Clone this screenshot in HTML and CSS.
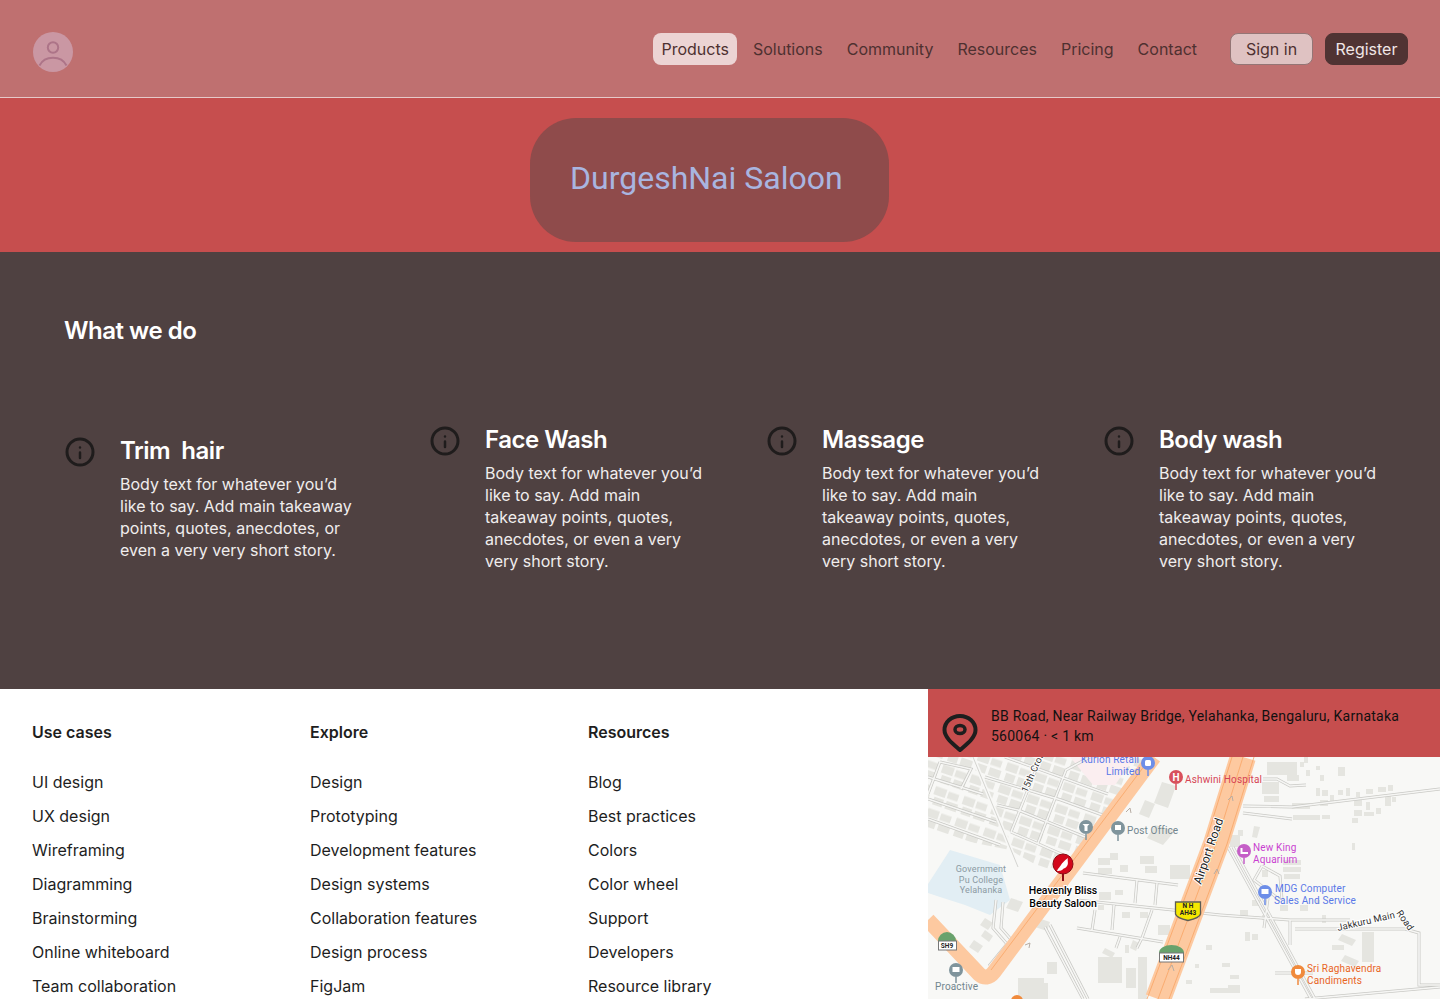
FILE: index.html
```html
<!DOCTYPE html>
<html lang="en">
<head>
  <meta charset="UTF-8" />
  <meta name="viewport" content="width=device-width, initial-scale=1.0" />
  <title>DurgeshNai Saloon</title>
  <link rel="stylesheet" href="styles.css">
</head>
<body>
  <header class="topbar">
    <div class="avatar">
      <svg viewBox="0 0 40 40" width="40" height="40">
        <circle cx="20" cy="15.5" r="5.2" fill="none" stroke="#ad7488" stroke-width="2" />
        <path d="M6.5 33.5C9 28.5 14 25.7 20 25.7s11 2.8 13.5 7.8" fill="none" stroke="#ad7488" stroke-width="2" />
      </svg>
    </div>
    <nav class="nav">
      <a class="nav-link active">Products</a>
      <a class="nav-link">Solutions</a>
      <a class="nav-link">Community</a>
      <a class="nav-link">Resources</a>
      <a class="nav-link">Pricing</a>
      <a class="nav-link">Contact</a>
    </nav>
    <div class="auth">
      <button class="btn btn-light">Sign in</button>
      <button class="btn btn-dark">Register</button>
    </div>
  </header>

  <section class="hero">
    <div class="hero-pill">DurgeshNai Saloon</div>
  </section>

  <section class="services">
    <h2>What we do</h2>
    <div class="service-grid">
      <div class="service service-first">
        <svg class="info" viewBox="0 0 30 30"><circle cx="15" cy="15" r="13" /><path d="M15 15.5V21M15 10.5v.1" /></svg>
        <div class="service-text">
          <h3>Trim&nbsp; hair</h3>
          <p>Body text for whatever you’d like to say. Add main takeaway points, quotes, anecdotes, or even a very very short story.</p>
        </div>
      </div>
      <div class="service">
        <svg class="info" viewBox="0 0 30 30"><circle cx="15" cy="15" r="13" /><path d="M15 15.5V21M15 10.5v.1" /></svg>
        <div class="service-text">
          <h3>Face Wash</h3>
          <p>Body text for whatever you’d like to say. Add main takeaway points, quotes, anecdotes, or even a very very short story.</p>
        </div>
      </div>
      <div class="service">
        <svg class="info" viewBox="0 0 30 30"><circle cx="15" cy="15" r="13" /><path d="M15 15.5V21M15 10.5v.1" /></svg>
        <div class="service-text">
          <h3>Massage</h3>
          <p>Body text for whatever you’d like to say. Add main takeaway points, quotes, anecdotes, or even a very very short story.</p>
        </div>
      </div>
      <div class="service">
        <svg class="info" viewBox="0 0 30 30"><circle cx="15" cy="15" r="13" /><path d="M15 15.5V21M15 10.5v.1" /></svg>
        <div class="service-text">
          <h3>Body wash</h3>
          <p>Body text for whatever you’d like to say. Add main takeaway points, quotes, anecdotes, or even a very very short story.</p>
        </div>
      </div>
    </div>
  </section>

  <footer class="footer">
    <div class="links">
      <div class="link-col">
        <h4>Use cases</h4>
        <a>UI design</a><a>UX design</a><a>Wireframing</a><a>Diagramming</a><a>Brainstorming</a><a>Online whiteboard</a><a>Team collaboration</a>
      </div>
      <div class="link-col">
        <h4>Explore</h4>
        <a>Design</a><a>Prototyping</a><a>Development features</a><a>Design systems</a><a>Collaboration features</a><a>Design process</a><a>FigJam</a>
      </div>
      <div class="link-col">
        <h4>Resources</h4>
        <a>Blog</a><a>Best practices</a><a>Colors</a><a>Color wheel</a><a>Support</a><a>Developers</a><a>Resource library</a>
      </div>
    </div>

    <div class="location">
      <div class="address">
        <svg class="pin" viewBox="0 0 36 38">
          <path d="M18 36C11 30 2.5 23.5 2.5 16a15.5 14 0 0 1 31 0C33.5 23.5 25 30 18 36z" />
          <ellipse cx="18" cy="15.5" rx="5" ry="4" />
        </svg>
        <p>BB Road, Near Railway Bridge, Yelahanka, Bengaluru, Karnataka 560064 · &lt; 1 km</p>
      </div>
      <svg class="map" viewBox="928 757 512 242" width="512" height="242">
        <defs>
          <pattern id="blocks" patternUnits="userSpaceOnUse" width="30" height="23" patternTransform="rotate(19)">
            <path fill="#e5e5e0" d="M1 1.5h12V10H1zM15 2.5h11v7H15zM3 12h10v8H3zM16 12h12v8H16z" />
          </pattern>
          <g id="streets">
            <path d="M1005 757l103 37M985 777l76 23 47 17M997 805l21 5 67 27M1011 832l64 28M1041 757l-30 75M1066 770l-28 73M928 777l55 17M940 762l31 7-10 20M940 762l-12 32M928 799l68 23M928 819l72 26M1090 757l-24 13" />
            <path d="M1083 873l95 12M1077 900l96 10 47 5M1077 928l86 14M1092 930l3-20M1112 930l2-25M1137 880l-2 23M1157 883l-2 22M1152 910l-10 28-5 10M1120 937l-4 11" />
            <path d="M1243 806l49 1 148-18M1243 813l49 6M1263 779h14l13 7 16-1" />
            <path d="M1228 847l83 152M1233 847l82 152M1220 915l70 5 60 0M1268 898l-4 30M1290 920v25M1295 929h110l14 4v52h21M1275 973h38M1305 999l135-12" />
            <path d="M1045 927l38 72M1050 925l38 74M1003 902l-2 26 14 16-24 28M996 900l-3 28 14 16-18 22" />
            <path d="M1262 866l-8 14 26 20M1262 866l18 10 2 24" />
          </g>
        </defs>

        <rect x="928" y="757" width="512" height="242" fill="#f8f8f6" />
        <path d="M928 884l22-34 50 15 10 35-20 15-25-10-25-8-12-4z" fill="#e2eef4" />
        <path d="M928 757h217l-70 103-30 10-35-20-50-10-32-10z" fill="url(#blocks)" />
        <path d="M1070 757h65l-20 28-22 0z" fill="#fbeef0" />

        <!-- buildings outside the dense blocks -->
        <path fill="#e5e5e0" d="M1162 782l14 4-8 22-14-5zM1145 800l10 4-6 14-10-4zM1155 825l20 6-12 14-16-7zM1267 762h30v13h-30zM1287 775h12v6h-12zM1262 782h17v12h-17zM1338 767h7v9h-7zM1264 796h15v6h-15zM1292 803h18v6h-18zM1293 815h27v5h-27zM1322 815h8v4h-8zM1300 762h4v5h-4zM1304 757h4v6h-4zM1306 770h4v6h-4zM1316 766h4v4h-4zM1320 775h4v6h-4zM1316 788h4v8h-4zM1322 790h6v6h-6zM1320 800h8v6h-8zM1330 795h4v8h-4zM1338 790h5v5h-5zM1346 788h4v8h-4zM1356 792h4v5h-4zM1366 789h7v5h-7zM1378 787h8v5h-8zM1388 785h5v6h-5zM1385 796h6v10h-6zM1392 797h4v5h-4zM1354 800h8v6h-8zM1366 802h4v8h-4zM1354 810h8v6h-8zM1364 812h10v4h-10zM1352 818h6v5h-6zM1376 808h5v6h-5zM1352 843h3v7h-3zM1254 826l6 1-3 11-5-1zM1230 835h10v12h-10zM1238 830h5v6h-5z" />
        <path fill="#e5e5e0" d="M1098 858h12v7h-12zM1110 853h8v7h-8zM1120 865h8v7h-8zM1098 868h14v6h-14zM1140 856h14v8h-14zM1145 866h12v7h-12zM1170 865h20v14h-20zM1099 892h12v8h-12zM1115 890h8v5h-8zM1098 905h6v5h-6zM1122 912h8v6h-8zM1140 912h8v6h-8zM1158 925h12v10h-12zM1105 948l10 5-3 5-10-5zM1125 945h4v8h-4zM1133 940l6 3-3 8-6-3zM1098 957h24v26h-24zM1126 968h10v20h-10zM1138 957h9v42h-9zM1047 962h10v12h-10zM1040 983h8v16h-8zM1018 978h26v21h-26zM1011 898l12 4-5 10-12-4zM1038 918l12 4-3 9-12-4zM985 918l8 5-5 7-8-5zM974 940l9 6-5 7-9-6zM970 960l10 6-5 7-10-6zM985 930l8 6-4 6-8-6zM1000 962l7 4-4 6-7-4zM1245 932h5v9h-5zM1252 934h6v6h-6zM1206 945h6v5h-6zM1230 975h9v4h-9zM1222 963h8v4h-8zM1195 964h4v4h-4zM1186 980h6v4h-6zM1228 985h12v5h-12zM1210 988h30v5h-30zM1283 860h18v5h-18zM1283 867h18v5h-18zM1284 874h16v5h-16zM1262 870h6v7h-6zM1280 905h8v6h-8zM1316 900h4v4h-4zM1300 905h8v6h-8zM1322 915h4v8h-4zM1332 945h12v5h-12zM1342 934l14 6-4 6-14-6zM1362 932h12v30h-12zM1345 955l14 6-4 6-14-6zM1262 915h5v5h-5zM1240 910h8v6h-8zM1252 900h8v6h-8z" />

        <!-- minor streets, casing then fill -->
        <use href="#streets" fill="none" stroke="#c9c9c5" stroke-width="3" />
        <use href="#streets" fill="none" stroke="#f6f6f4" stroke-width="1.6" />
        <path d="M973 757l45 110" fill="none" stroke="#f8f8f6" stroke-width="4" />
        <path d="M973 757l45 110" fill="none" stroke="#d4d4d0" stroke-width="1" />

        <!-- main roads -->
        <g fill="none" stroke-linejoin="round">
          <path d="M1154 757L994 972q-7 9-15 2L928 920" stroke="#fdc9a0" stroke-width="15" />
          <path d="M1151 757L991 970" stroke="#f9a565" stroke-width="0.8" />
          <path d="M1243 757l-27 87-58 155" stroke="#fdc9a0" stroke-width="26" />
          <path d="M1232 757l-27 87-58 155M1254 757l-27 87-58 155M1243 757l-27 87-58 155" stroke="#f9a565" stroke-width="0.8" />
        </g>
        <g fill="none" stroke="#b7ada4" stroke-width="1">
          <path d="M1228 800l4-4 1 5M1168 970l4-5 2 6M1214 874l3-5 2 5M1190 906l3-4 2 5M1126 812l4-4 1 5M1025 945l5-2-1 5" />
        </g>

        <!-- road shields -->
        <path d="M1175.5 902h25v12q-1 4-12.5 6.500q-11.500-2.500-12.500-6.500z" fill="#f5e800" stroke="#5d5d55" stroke-width="1.300" />
        <path d="M938 941a9 9 0 0 1 18 0z" fill="#68a26c" />
        <rect x="938.5" y="941" width="18" height="9" fill="#fff" stroke="#777" />
        <path d="M1159 953a12.5 8 0 0 1 25 0z" fill="#68a26c" />
        <rect x="1159.5" y="953" width="24" height="9" fill="#fff" stroke="#777" />

        <!-- place pins -->
        <circle cx="1148" cy="763" r="7" fill="#6d8ee8" /><path d="M1148 770v6" stroke="#6d8ee8" stroke-width="1.5" /><rect x="1145" y="760" width="6" height="6" rx="1.5" fill="#fff" />
        <circle cx="1176" cy="777" r="7" fill="#d8505c" /><path d="M1176 784v6" stroke="#d8505c" stroke-width="1.5" /><text class="pin-letter" x="1176" y="780.5" text-anchor="middle">H</text>
        <circle cx="1086" cy="827" r="7" fill="#7f949c" /><path d="M1086 834v6" stroke="#7f949c" stroke-width="1.5" /><path d="M1082.5 824h7l-2 2v5h-3v-5z" fill="#fff" />
        <circle cx="1118" cy="828" r="7" fill="#7f949c" /><path d="M1118 835v6" stroke="#7f949c" stroke-width="1.5" /><rect x="1115" y="825" width="6" height="5" fill="#fff" />
        <circle cx="1244" cy="851" r="7" fill="#c55fc7" /><path d="M1244 858v6" stroke="#c55fc7" stroke-width="1.5" /><path d="M1240.5 848v6h7.5v-2h-5.5v-4z" fill="#fff" />
        <circle cx="1265" cy="892" r="7" fill="#6d8ee8" /><path d="M1265 899v6" stroke="#6d8ee8" stroke-width="1.5" /><rect x="1261.5" y="889" width="7" height="5" fill="#fff" />
        <circle cx="956" cy="970" r="7" fill="#7f949c" /><path d="M956 977v6" stroke="#7f949c" stroke-width="1.5" /><rect x="952.5" y="967" width="7" height="5" fill="#fff" />
        <circle cx="1298" cy="972" r="7" fill="#f08a3c" /><path d="M1298 979v6" stroke="#f08a3c" stroke-width="1.5" /><path d="M1295 969h6v3a3 3 0 0 1-6 0z" fill="#fff" />
        <circle cx="1017" cy="1001" r="6" fill="#f08a3c" />

        <!-- saloon marker -->
        <path d="M1063 881v-9" stroke="#8c0a14" stroke-width="2" />
        <circle cx="1063" cy="864" r="10" fill="#d3071b" stroke="#8c0a14" stroke-width="1" />
        <path d="M1057 871c1-3 3-4 4-6 1-2 3-4 7-7-1 3 1 5-1 8-1 2-3 2-4 3 0 1-3 2-6 2z" fill="#fff" />

        <!-- labels -->
        <g class="map-labels">
          <text class="lbl-blue" x="1081" y="763">Kurlon Retail</text>
          <text class="lbl-blue" x="1106" y="775">Limited</text>
          <text class="lbl-red" x="1185" y="783">Ashwini Hospital</text>
          <text class="lbl-grey" x="1127" y="834">Post Office</text>
          <text class="lbl-pink" x="1253" y="851">New King</text>
          <text class="lbl-pink" x="1253" y="863">Aquarium</text>
          <text class="lbl-blue" x="1275" y="892">MDG Computer</text>
          <text class="lbl-blue" x="1274" y="904">Sales And Service</text>
          <text class="lbl-orange" x="1307" y="972">Sri Raghavendra</text>
          <text class="lbl-orange" x="1307" y="984">Candiments</text>
          <text class="lbl-grey" x="935" y="990">Proactive</text>
          <text class="lbl-campus" x="981" y="872" text-anchor="middle">Government</text>
          <text class="lbl-campus" x="981" y="883" text-anchor="middle">Pu College</text>
          <text class="lbl-campus" x="981" y="893" text-anchor="middle">Yelahanka</text>
          <text class="lbl-main" x="1063" y="894" text-anchor="middle">Heavenly Bliss</text>
          <text class="lbl-main" x="1063" y="907" text-anchor="middle">Beauty Saloon</text>
          <text class="lbl-road-sm" transform="translate(1027 793) rotate(-66)">15th Cross</text>
          <text class="lbl-road" transform="translate(1201 885) rotate(-71)">Airport Road</text>
          <text class="lbl-road-sm" transform="translate(1338 931) rotate(-13)">Jakkuru Main</text>
          <text class="lbl-road-sm" transform="translate(1396 913) rotate(55)">Road</text>
          <text class="lbl-shield" x="1188" y="908" text-anchor="middle">N H</text>
          <text class="lbl-shield" x="1188" y="915" text-anchor="middle">AH43</text>
          <text class="lbl-shield" x="947" y="948" text-anchor="middle">SH9</text>
          <text class="lbl-shield" x="1171.5" y="960" text-anchor="middle">NH44</text>
        </g>
      </svg>
    </div>
  </footer>
</body>
</html>
```

FILE: styles.css
```css
* { box-sizing: border-box; }
html, body { margin: 0; height: 999px; overflow: hidden; }
body { font-family: Inter, "Liberation Sans", sans-serif; background: #fff; color: #1e1e1e; }

.topbar { height: 98px; display: flex; align-items: flex-start; padding: 33px 32px 0 33px; background: #bf7070; border-bottom: 1px solid #e6c9c9; }
.avatar { width: 40px; height: 40px; margin-top: -1px; border-radius: 50%; background: #ca97a3; overflow: hidden; }
.avatar svg { display: block; }
.nav { margin-left: auto; display: flex; gap: 8px; }
.nav-link { height: 32px; padding: 0 8px; border-radius: 8px; font-size: 16px; line-height: 32px; color: #4e3030; }
.nav-link.active { background: #ecd4d4; }
.auth { margin-left: 25px; display: flex; gap: 12px; }
.btn { height: 32px; width: 83px; padding: 0; border-radius: 8px; font-family: inherit; font-size: 16px; }
.btn-light { background: #dfc2c2; border: 1px solid #947575; color: #4e3030; }
.btn-dark { background: #503333; border: 1px solid #503333; color: #f1e6e6; }

.hero { height: 154px; padding: 20px 0 0 530px; background: #c64e4e; }
.hero-pill { width: 359px; height: 124px; padding-left: 40px; border-radius: 46px; background: #8f4b4b; color: #a9b5e0; font-family: Roboto, sans-serif; font-size: 32px; line-height: 120px; }

.services { height: 437px; padding: 64px 0 0 65px; background: #4f4141; color: #fff; }
.services h2 { margin: 0 0 0 -1px; font-size: 24px; line-height: 30px; font-weight: 600; letter-spacing: -0.48px; }
.service-grid { display: grid; grid-template-columns: 365px 337px 337px 336px; margin-top: 78px; }
.service { display: flex; gap: 25px; align-items: flex-start; }
.service-first { padding-top: 11px; }
.info { flex: none; width: 30px; height: 30px; margin-top: 2px; fill: none; stroke: #1f1c1c; stroke-width: 3; }
.info path { stroke-width: 2.5; stroke-linecap: round; }
.service-text { width: 226px; }
.service-first .service-text { width: 240px; }
.service-text h3 { margin: 1px 0 7px; font-size: 24px; line-height: 30px; font-weight: 600; letter-spacing: -0.48px; }
.service-text p { margin: 0; font-size: 16px; line-height: 22px; color: #f0eded; }

.footer { display: flex; height: 310px; }
.links { width: 928px; display: flex; padding: 32px 0 0 32px; overflow: hidden; }
.link-col { width: 278px; flex: none; }
.link-col h4 { margin: 0 0 28px; font-size: 16px; line-height: 22px; font-weight: 600; }
.link-col a { display: block; font-size: 16px; line-height: 22px; margin-bottom: 12px; color: #1e1e1e; }

.location { width: 512px; }
.address { height: 68px; display: flex; align-items: flex-start; gap: 13px; padding: 17px 24px 0 14px; background: #c64e4e; }
.pin { flex: none; width: 36px; height: 38px; margin-top: 8px; fill: none; stroke: #1e1e1e; stroke-width: 4; }
.pin ellipse { stroke-width: 3.5; }
.address p { margin: 0; font-family: Roboto, sans-serif; font-size: 14px; line-height: 20px; letter-spacing: 0.25px; color: #111; }
.map { display: block; }

.map-labels text { font-family: Roboto, sans-serif; font-size: 10px; letter-spacing: 0.15px; }
.pin-letter { font-family: Roboto, sans-serif; font-size: 10px; font-weight: 700; fill: #fff; }
.lbl-blue { fill: #5a78e8; }
.lbl-red { fill: #d64454; }
.lbl-grey { fill: #72868e; }
.lbl-pink { fill: #c93fd0; }
.lbl-orange { fill: #e8651f; }
.map-labels .lbl-campus { fill: #8b9aa3; font-size: 9px; }
.map-labels .lbl-main { fill: #000; font-size: 10.5px; font-weight: 500; letter-spacing: 0; stroke: #fff; stroke-width: 2px; paint-order: stroke; }
.map-labels .lbl-road { fill: #222; font-size: 12px; stroke: #fff; stroke-width: 2px; paint-order: stroke; }
.map-labels .lbl-road-sm { fill: #333; font-size: 9.5px; stroke: #fff; stroke-width: 2px; paint-order: stroke; }
.map-labels .lbl-shield { fill: #222; font-size: 6.5px; font-weight: 700; letter-spacing: 0; }
```
